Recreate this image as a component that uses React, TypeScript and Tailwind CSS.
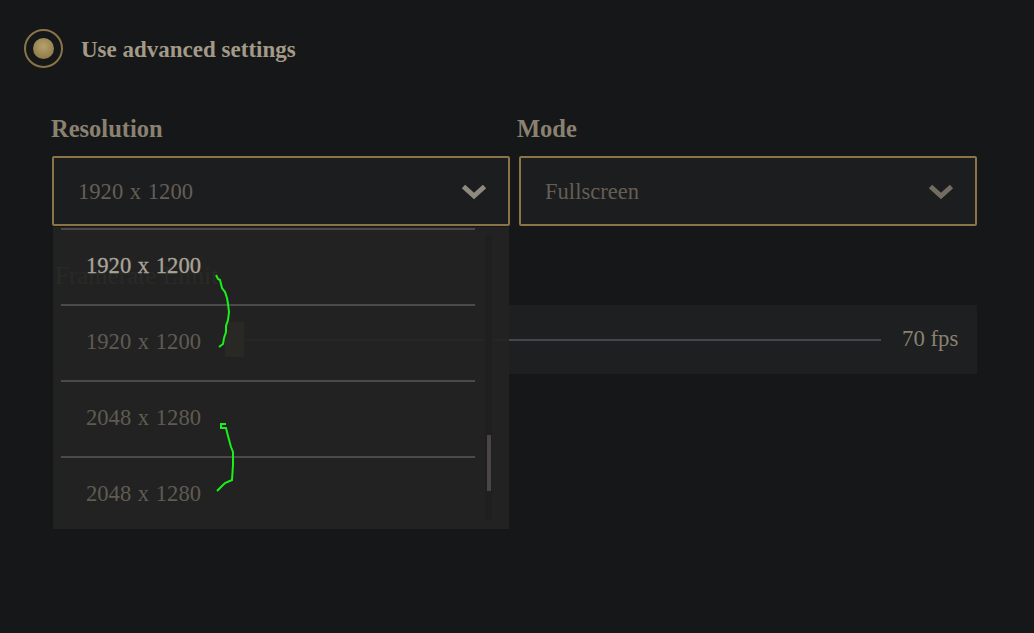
import React from 'react';

const serif = "font-['Liberation_Serif','DejaVu_Serif',serif]";

const Chevron = ({ color }: { color: string }) => (
  <svg width="26" height="17" viewBox="0 0 26 17" fill="none">
    <path d="M2.5 3.5 L13 13 L23.5 3.5" stroke={color} strokeWidth="5" />
  </svg>
);

const Select = ({ value, chevron }: { value: string; chevron: string }) => (
  <div className="flex h-[70px] items-center justify-between rounded-[2px] border-2 border-[#8a7447] bg-[#1b1d1f] pl-[24px] pr-[21px]">
    <span className="pt-[1px] text-[22.6px] text-[#655e54] [word-spacing:1px]">{value}</span>
    <Chevron color={chevron} />
  </div>
);

const options = [
  { label: '1920 x 1200', active: true },
  { label: '1920 x 1200', active: false },
  { label: '2048 x 1280', active: false },
  { label: '2048 x 1280', active: false },
];

export default function App() {
  return (
    <div className={`relative h-[633px] w-[1034px] overflow-hidden bg-[#151719] ${serif}`}>
      {/* Advanced toggle */}
      <div className="flex items-center gap-[18px] pl-[24px] pt-[29px]">
        <div className="flex h-[39px] w-[39px] items-center justify-center rounded-full border-2 border-[#8a7447]">
          <div className="h-[21px] w-[21px] rounded-full bg-[radial-gradient(circle_at_50%_40%,#b5a26c,#8f7c4a_75%,#6d5d38)]" />
        </div>
        <span className="pt-[4px] text-[23px] font-bold text-[#a39a87]">Use advanced settings</span>
      </div>

      {/* Selects */}
      <div className="ml-[52px] mt-[47px] grid w-[925px] grid-cols-[458px_458px] gap-x-[9px]">
        <div>
          <div className="mb-[13px] h-[28px] text-[24.5px] font-bold leading-[28px] text-[#8a8170] -ml-[1px]">Resolution</div>
          <Select value="1920 x 1200" chevron="#8f8a80" />
        </div>
        <div>
          <div className="mb-[13px] h-[28px] text-[24.5px] font-bold leading-[28px] text-[#8a8170] -ml-[2px]">Mode</div>
          <Select value="Fullscreen" chevron="#746c60" />
        </div>
      </div>

      {/* Framerate */}
      <div className="ml-[53px] mt-[36px] w-[924px]">
        <div className="ml-[2px] h-[28px] text-[25px] leading-[28px] text-[#8a8170]">Framerate Limit</div>
        <div className="mt-[15px] flex h-[69px] items-center bg-[#1d1f21] pl-[172px]">
          <div className="h-[35px] w-[19px] shrink-0 bg-[#967038]" />
          <div className="h-[2px] w-[637px] shrink-0 bg-[#45464a]" />
          <span className="ml-[21px] whitespace-nowrap text-[22.8px] text-[#8a8170]">70 fps</span>
        </div>
      </div>

      {/* Open dropdown over the form */}
      <div className="absolute left-[53px] top-[227px] flex h-[302px] w-[456px] bg-[#232323]/[0.94]">
        <div className="ml-[8px] mt-[1px] w-[414px]">
          {options.map((o, i) => (
            <div
              key={i}
              className={`flex h-[76px] items-center border-t-2 border-[#4b4a46] pb-[3px] pl-[25px] text-[22.6px] [word-spacing:1px] ${
                o.active ? 'text-[#aaa498] [-webkit-text-stroke:0.3px_#aaa498]' : 'text-[#5f5b52]'
              }`}
            >
              {o.label}
            </div>
          ))}
        </div>
        <div className="ml-[10px] mt-[8px] h-[285px] w-[7px] bg-[#1f1f1f] pl-[2px]">
          <div className="mt-[200px] h-[56px] w-[4px] bg-[#4a4646]" />
        </div>
      </div>

      {/* Hand-drawn green marks */}
      <svg className="absolute left-0 top-0" width="1034" height="633" fill="none">
        <path
          d="M216 275 L218 279 L220 280 L222 288 L225 292 L227 298 L228 304 L229 312 L228 320 L226 326 L226 332 L224 338 L223 344 L219 347"
          stroke="#19f019"
          strokeWidth="2"
        />
        <path
          d="M226 424 L221 424 L221 428 L226 428 L228 436 L231 447 L233 452 L233 465 L232 480 L225 483 L222 486 L217 491"
          stroke="#19f019"
          strokeWidth="2"
        />
      </svg>
    </div>
  );
}
